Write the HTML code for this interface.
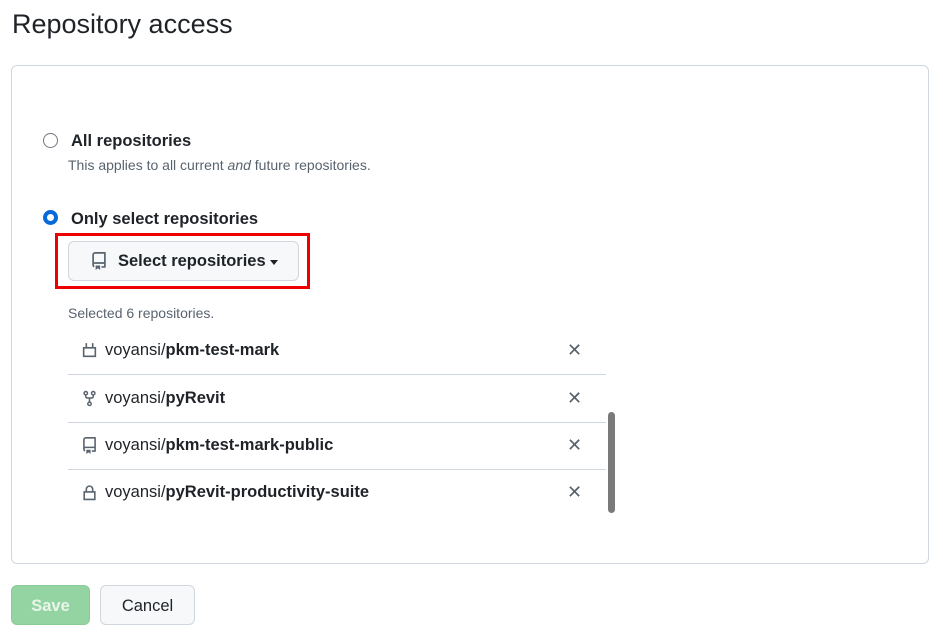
<!DOCTYPE html>
<html><head><style>
body{margin:0;width:943px;height:638px;background:#fff;font-family:"Liberation Sans",sans-serif;color:#1f2328;position:relative;overflow:hidden}
.a{position:absolute}
h1{position:absolute;left:12px;top:9px;margin:0;font-size:27px;font-weight:400}
.box{left:11px;top:65px;width:916px;height:497px;border:1px solid #d0d7de;border-radius:6px}
.radio{width:15px;height:15px;border:1px solid #6e7781;border-radius:50%;box-sizing:border-box}
.lbl{font-size:16.5px;font-weight:600}
.note{font-size:14px;color:#59636e}
.row{left:68px;width:538px;height:47px;border-bottom:1px solid #d0d7de;font-size:16.5px;display:flex;align-items:center}
.row svg{margin:0 7px 0 13px}
.x{position:absolute;left:499px;top:13px;color:#59636e;font-size:18px}
</style></head><body>
<h1>Repository access</h1>
<div class="a box"></div>
<div class="a radio" style="left:43px;top:133px"></div>
<div class="a lbl" style="left:71px;top:132px">All repositories</div>
<div class="a note" style="left:68px;top:157px">This applies to all current <i>and</i> future repositories.</div>
<div class="a radio" style="left:43px;top:210px;border:4px solid #0969da"></div>
<div class="a lbl" style="left:71px;top:210px">Only select repositories</div>
<div class="a" style="left:55px;top:233px;width:249px;height:50px;border:3px solid #e00"></div>
<div class="a" style="left:68px;top:241px;width:229px;height:38px;border:1px solid #d0d7de;border-radius:6px;background:#f6f8fa;display:flex;align-items:center">
<svg style="margin-left:21px" width="18" height="18" viewBox="0 0 16 16"><path fill="#59636e" d="M2 2.5A2.5 2.5 0 0 1 4.5 0h8.75a.75.75 0 0 1 .75.75v12.5a.75.75 0 0 1-.75.75h-2.5a.75.75 0 0 1 0-1.5h1.75v-2h-8a1 1 0 0 0-.71 1.71.75.75 0 0 1-1.07 1.05A2.5 2.5 0 0 1 2 11.5Zm10.5-1h-8a1 1 0 0 0-1 1v6.71A2.5 2.5 0 0 1 4.5 9h8ZM5 12.25a.25.25 0 0 1 .25-.25h3.5a.25.25 0 0 1 .25.25v3.25a.25.25 0 0 1-.4.2l-1.45-1.09a.25.25 0 0 0-.3 0L5.4 15.7a.25.25 0 0 1-.4-.2Z"/></svg>
<span class="lbl" style="margin-left:10px">Select repositories</span><span style="margin-left:4px;border:4px solid transparent;border-top:5px solid #1f2328;margin-top:6px"></span></div>
<div class="a note" style="left:68px;top:305px">Selected 6 repositories.</div>
<div class="a row" style="top:327px"><svg width="17" height="17" viewBox="0 0 16 16"><path fill="none" stroke="#59636e" stroke-width="1.5" d="M2.5 5.5h11v8h-11zM5 1v4.5M11 1v4.5"/></svg>voyansi/<b>pkm-test-mark</b><span class="x">✕</span></div>
<div class="a row" style="top:375px"><svg width="17" height="17" viewBox="0 0 16 16"><g fill="none" stroke="#59636e" stroke-width="1.4"><circle cx="4.5" cy="3" r="1.6"/><circle cx="11.5" cy="3" r="1.6"/><circle cx="8" cy="13" r="1.6"/><path d="M4.5 4.6v1.4q0 1.5 1.5 1.5h4q1.5 0 1.5-1.5V4.6M8 7.5v4"/></g></svg>voyansi/<b>pyRevit</b><span class="x">✕</span></div>
<div class="a row" style="top:422px"><svg width="17" height="17" viewBox="0 0 16 16"><path fill="#59636e" d="M2 2.5A2.5 2.5 0 0 1 4.5 0h8.75a.75.75 0 0 1 .75.75v12.5a.75.75 0 0 1-.75.75h-2.5a.75.75 0 0 1 0-1.5h1.75v-2h-8a1 1 0 0 0-.71 1.71.75.75 0 0 1-1.07 1.05A2.5 2.5 0 0 1 2 11.5Zm10.5-1h-8a1 1 0 0 0-1 1v6.71A2.5 2.5 0 0 1 4.5 9h8ZM5 12.25a.25.25 0 0 1 .25-.25h3.5a.25.25 0 0 1 .25.25v3.25a.25.25 0 0 1-.4.2l-1.45-1.09a.25.25 0 0 0-.3 0L5.4 15.7a.25.25 0 0 1-.4-.2Z"/></svg>voyansi/<b>pkm-test-mark-public</b><span class="x">✕</span></div>
<div class="a row" style="top:469px;border:none"><svg width="17" height="17" viewBox="0 0 16 16"><path fill="none" stroke="#59636e" stroke-width="1.5" d="M3 7.5h10v7H3zM5 7.5V5a3 3 0 0 1 6 0v2.5"/></svg>voyansi/<b>pyRevit-productivity-suite</b><span class="x">✕</span></div>
<div class="a" style="left:608px;top:412px;width:7px;height:101px;border-radius:4px;background:#7a7a7a"></div>
<div class="a" style="left:11px;top:585px;width:77px;height:38px;border-radius:6px;background:#94d3a2;border:1px solid #8acb98;color:#e8f6ea;font-weight:600;font-size:16.5px;line-height:40px;text-align:center">Save</div>
<div class="a" style="left:100px;top:585px;width:93px;height:38px;border-radius:6px;background:#f6f8fa;border:1px solid #d0d7de;font-size:16.5px;line-height:40px;text-align:center">Cancel</div>
</body></html>
